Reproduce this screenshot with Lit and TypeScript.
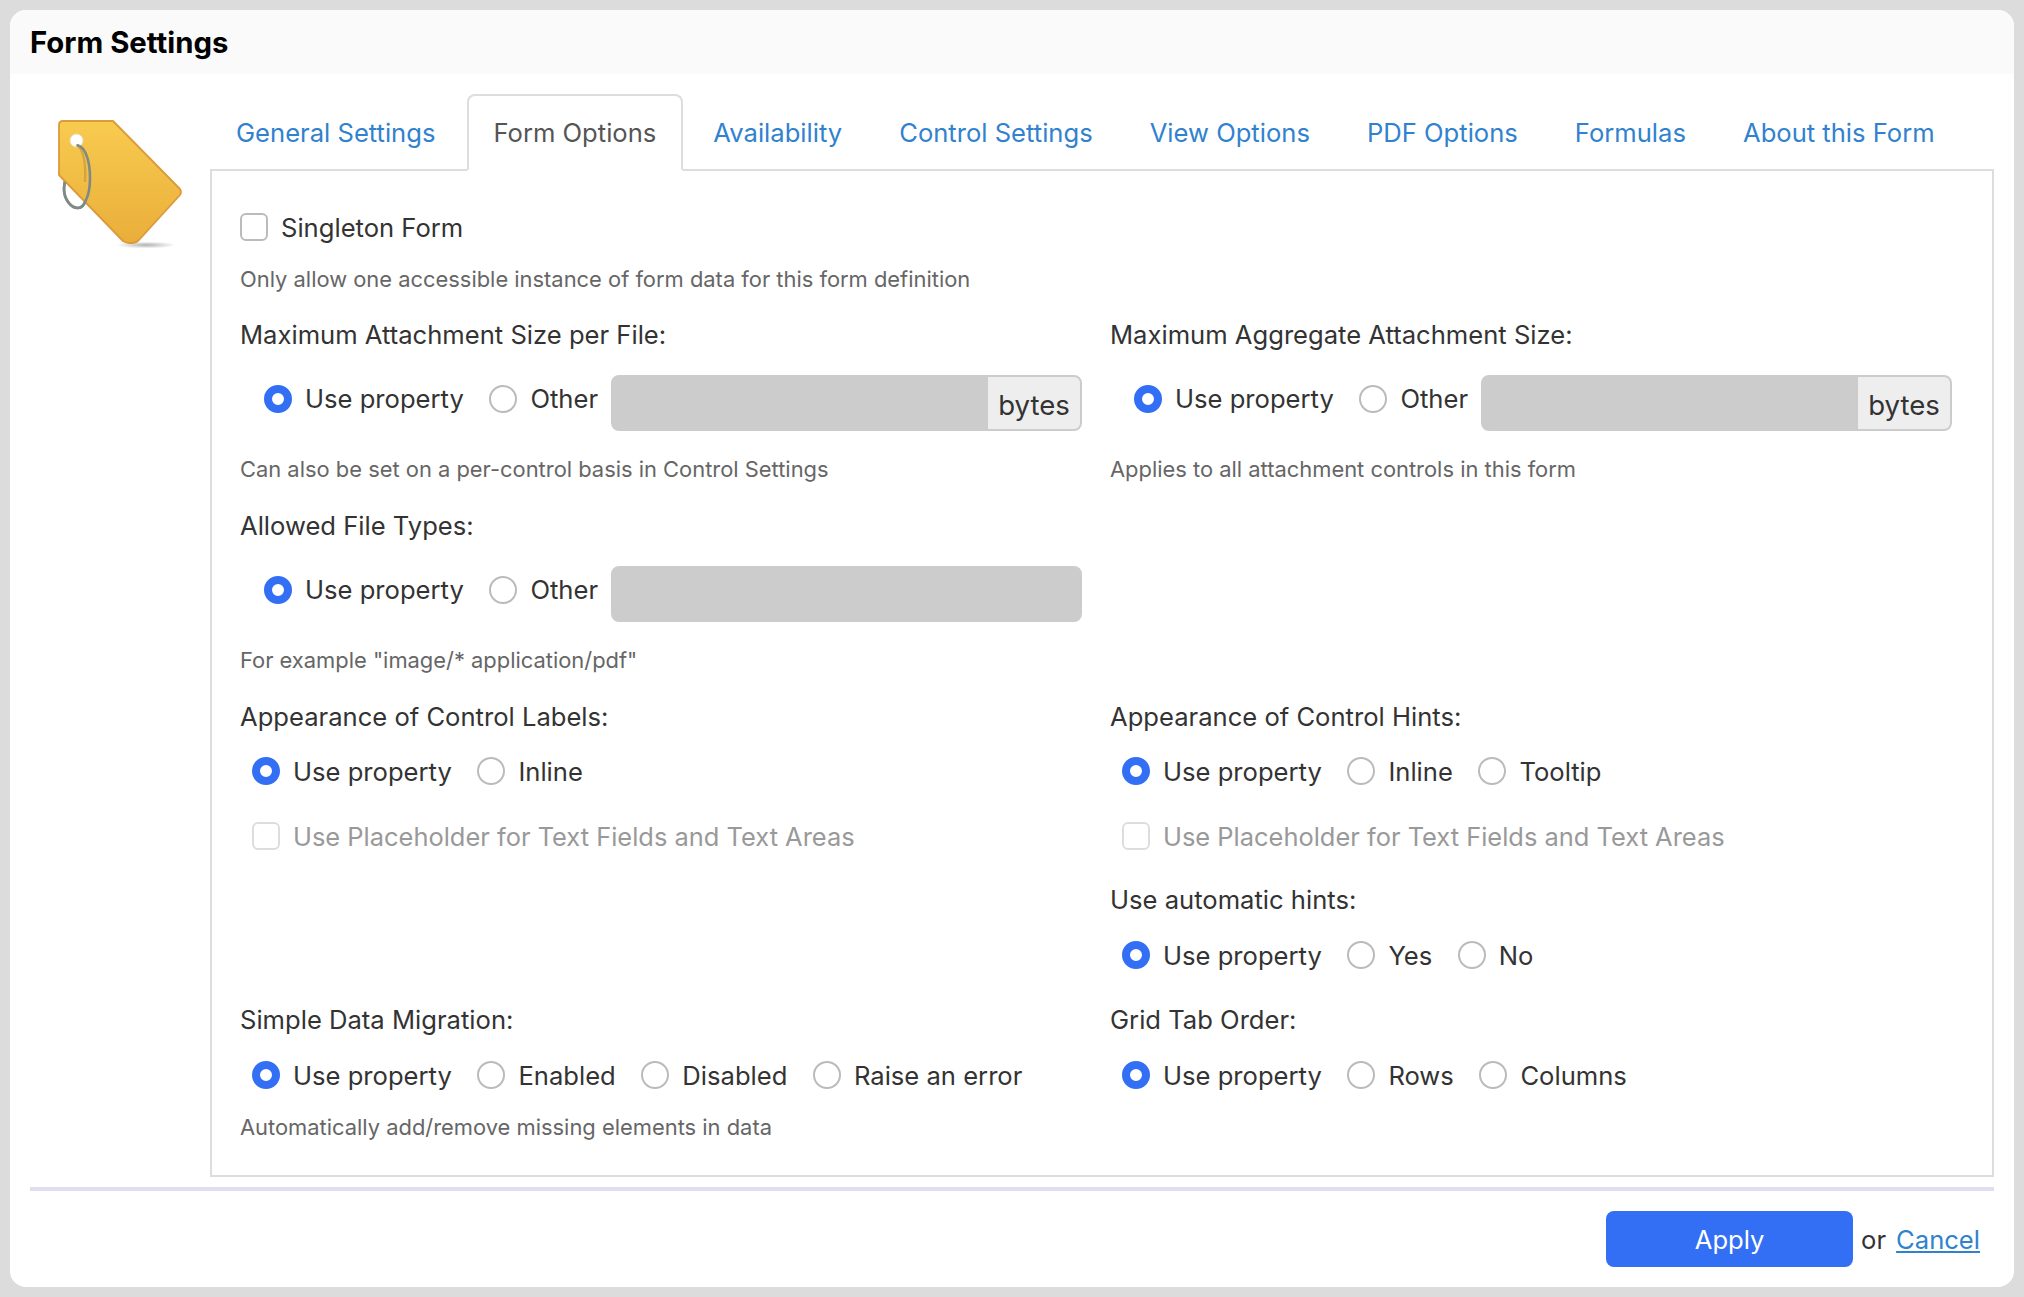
import { LitElement, html, css } from "lit";
import { customElement } from "lit/decorators.js";

const tabs = ["General Settings", "Form Options", "Availability", "Control Settings", "View Options", "PDF Options", "Formulas", "About this Form"];

@customElement("app-root")
export class AppRoot extends LitElement {
  static styles = css`
    :host { display: block; height: 1297px; box-sizing: border-box; padding: 10px; background: #dcdcdc; font-family: Inter, "Liberation Sans", sans-serif; color: #333; font-size: 25.6px; }
    * { box-sizing: border-box; }
    .card { height: 1277px; background: #fff; border-radius: 16px; overflow: hidden; display: flex; flex-direction: column; }
    .head { height: 64px; background: #fafafa; padding-left: 20px; display: flex; align-items: center; font-size: 29.3px; font-weight: 700; color: #000; }
    .body { display: flex; padding: 20px 20px 0 20px; }
    .icon { width: 180px; flex: none; padding: 26px 0 0 28px; }
    .icon svg { display: block; }
    .main { width: 1784px; flex: none; }
    .tabs { display: flex; height: 76px; position: relative; z-index: 1; margin-bottom: -1px; }
    .tab { height: 77px; padding: 0 24px; margin-right: 5px; display: flex; align-items: center; color: #3182ce; border: 2px solid transparent; white-space: nowrap; }
    .tab:first-child { margin-right: 6px; }
    .tab.on { color: #555; background: #fff; border-color: #ddd; border-bottom-color: #fff; border-radius: 8px 8px 0 0; padding-right: 25px; margin-right: 4px; }
    .panel { height: 1008px; border: 2px solid #ddd; padding: 0 40px 0 28px; }
    .row { display: grid; grid-template-columns: 842px 842px; column-gap: 28px; }
    .line { display: flex; align-items: center; white-space: nowrap; }
    .hint { font-size: 21.9px; color: #666; white-space: nowrap; }
    .radios { display: flex; align-items: center; white-space: nowrap; }
    .radios.deep { padding-left: 24px; align-items: flex-start; }
    .radios.deep .opt { height: 47px; }
    .radios.shallow { padding-left: 12px; }
    .radio { width: 28px; height: 28px; border-radius: 50%; border: 2px solid #bbb; background: #fff; flex: none; margin-right: 13px; }
    .radio.on { border: 8.5px solid #326ff5; }
    .opt { display: flex; align-items: center; margin-right: 25.6px; }
    .check { width: 28px; height: 28px; border-radius: 6px; border: 2px solid #bbb; flex: none; margin-right: 13px; }
    .disabled { color: #999; font-size: 25.45px; }
    .disabled .check { border-color: #ddd; }
    .field { flex: 1; height: 56px; background: #ccc; border: 2px solid #ccc; border-radius: 8px; display: flex; justify-content: flex-end; overflow: hidden; margin-left: -12.6px; }
    .addon { width: 92px; background: #eee; display: flex; align-items: center; justify-content: center; padding-top: 4px; font-size: 27.6px; }
    .cell { display: flex; flex-direction: column; }
    .foot { margin: 10px 20px 0; border-top: 4px solid #e0dff0; padding: 20px 0 0; display: flex; justify-content: flex-end; align-items: center; }
    .apply { width: 247px; height: 56px; border: none; border-radius: 8px; background: #326ff5; color: #fff; font: inherit; display: flex; align-items: center; justify-content: center; }
    .or { margin: 0 10px 0 8px; }
    .cancel { color: #3182ce; text-decoration: underline; margin-right: 14px; }
    .s1 { margin-top: 42px; height: 28px; display:flex; align-items:center; }
    .lab { height: 32px; display: flex; align-items: center; }
    .hgt56 { height: 56px; }
    .r32 { margin-top: 23px; height: 32px; }
    .r32b { margin-top: 24px; height: 32px; }
    .dis { margin: 33px 0 0 12px; height: 32px; }
  `;

  opts(list: string[]) {
    return list.map((t, i) => html`<div class="opt"><span class="radio ${i === 0 ? "on" : ""}"></span><span>${t}</span></div>`);
  }

  sizeCell(label: string, hint: string, addon: boolean) {
    return html`<div class="cell">
      <div class="lab">${label}</div>
      <div class="radios deep hgt56" style="margin-top:25px">
        ${this.opts(["Use property", "Other"])}
        <div class="field">${addon ? html`<div class="addon">bytes</div>` : ""}</div>
      </div>
      <div class="hint" style="margin-top:25px">${hint}</div>
    </div>`;
  }

  render() {
    return html`<div class="card">
      <div class="head">Form Settings</div>
      <div class="body">
        <div class="icon">
          <svg width="134" height="134" viewBox="0 0 134 134">
            <defs>
              <linearGradient id="g" x1="0" y1="0" x2="0" y2="1"><stop offset="0" stop-color="#f8cb4f"/><stop offset="1" stop-color="#e9ae3a"/></linearGradient>
              <radialGradient id="sh"><stop offset="0" stop-color="#8f8f8f" stop-opacity=".7"/><stop offset="1" stop-color="#999" stop-opacity="0"/></radialGradient>
            </defs>
            <ellipse cx="88" cy="125" rx="30" ry="3.5" fill="url(#sh)"/>
            <path d="M19 25 C13 32 7 50 6 68 C6 78 12 88 20 88 C24 88 27 84 29 78" fill="none" stroke="#7f8a86" stroke-width="2.6"/>
            <path d="M1 5 Q1 1 5 1 H55 L122 69 Q124 72 122 75 L81 120 Q78 123 75 123 H71 Q68 123 65 121 L1 55 Z" fill="url(#g)" stroke="#dc9a3a" stroke-width="1.8" stroke-linejoin="round"/>
            <circle cx="18.5" cy="20.5" r="6.5" fill="#fff" stroke="#e8e0c4" stroke-width="1"/>
            <path d="M18 25 C26 27 28 46 27 62" fill="none" stroke="#c79a3c" stroke-width="2.4" opacity=".7"/>
            <path d="M19 25 C29 27 32 45 32 58 C32 68 30 76 28 80 C26 85 23 88 20 88 C12 88 6 78 6 70 Q6 65 7 62" fill="none" stroke="#7f8a86" stroke-width="2.6"/>
          </svg>
        </div>
        <div class="main">
          <div class="tabs">
            ${tabs.map((t, i) => html`<div class="tab ${i === 1 ? "on" : ""}">${t}</div>`)}
          </div>
          <div class="panel">
            <div class="line s1"><span class="check"></span>Singleton Form</div>
            <div class="hint" style="margin-top:25px">Only allow one accessible instance of form data for this form definition</div>
            <div class="row" style="margin-top:26px">
              ${this.sizeCell("Maximum Attachment Size per File:", "Can also be set on a per-control basis in Control Settings", true)}
              ${this.sizeCell("Maximum Aggregate Attachment Size:", "Applies to all attachment controls in this form", true)}
            </div>
            <div class="row" style="margin-top:27px">
              ${this.sizeCell("Allowed File Types:", 'For example "image/* application/pdf"', false)}
            </div>
            <div class="row" style="margin-top:27px">
              <div class="cell">
                <div class="lab">Appearance of Control Labels:</div>
                <div class="radios shallow r32">${this.opts(["Use property", "Inline"])}</div>
                <div class="line disabled dis"><span class="check"></span>Use Placeholder for Text Fields and Text Areas</div>
              </div>
              <div class="cell">
                <div class="lab">Appearance of Control Hints:</div>
                <div class="radios shallow r32">${this.opts(["Use property", "Inline", "Tooltip"])}</div>
                <div class="line disabled dis"><span class="check"></span>Use Placeholder for Text Fields and Text Areas</div>
                <div class="lab" style="margin-top:31px">Use automatic hints:</div>
                <div class="radios shallow r32b">${this.opts(["Use property", "Yes", "No"])}</div>
              </div>
            </div>
            <div class="row" style="margin-top:32px">
              <div class="cell">
                <div class="lab">Simple Data Migration:</div>
                <div class="radios shallow r32b">${this.opts(["Use property", "Enabled", "Disabled", "Raise an error"])}</div>
                <div class="hint" style="margin-top:23px">Automatically add/remove missing elements in data</div>
              </div>
              <div class="cell">
                <div class="lab">Grid Tab Order:</div>
                <div class="radios shallow r32b">${this.opts(["Use property", "Rows", "Columns"])}</div>
              </div>
            </div>
          </div>
        </div>
      </div>
      <div class="foot">
        <button class="apply">Apply</button><span class="or">or</span><span class="cancel">Cancel</span>
      </div>
    </div>`;
  }
}
